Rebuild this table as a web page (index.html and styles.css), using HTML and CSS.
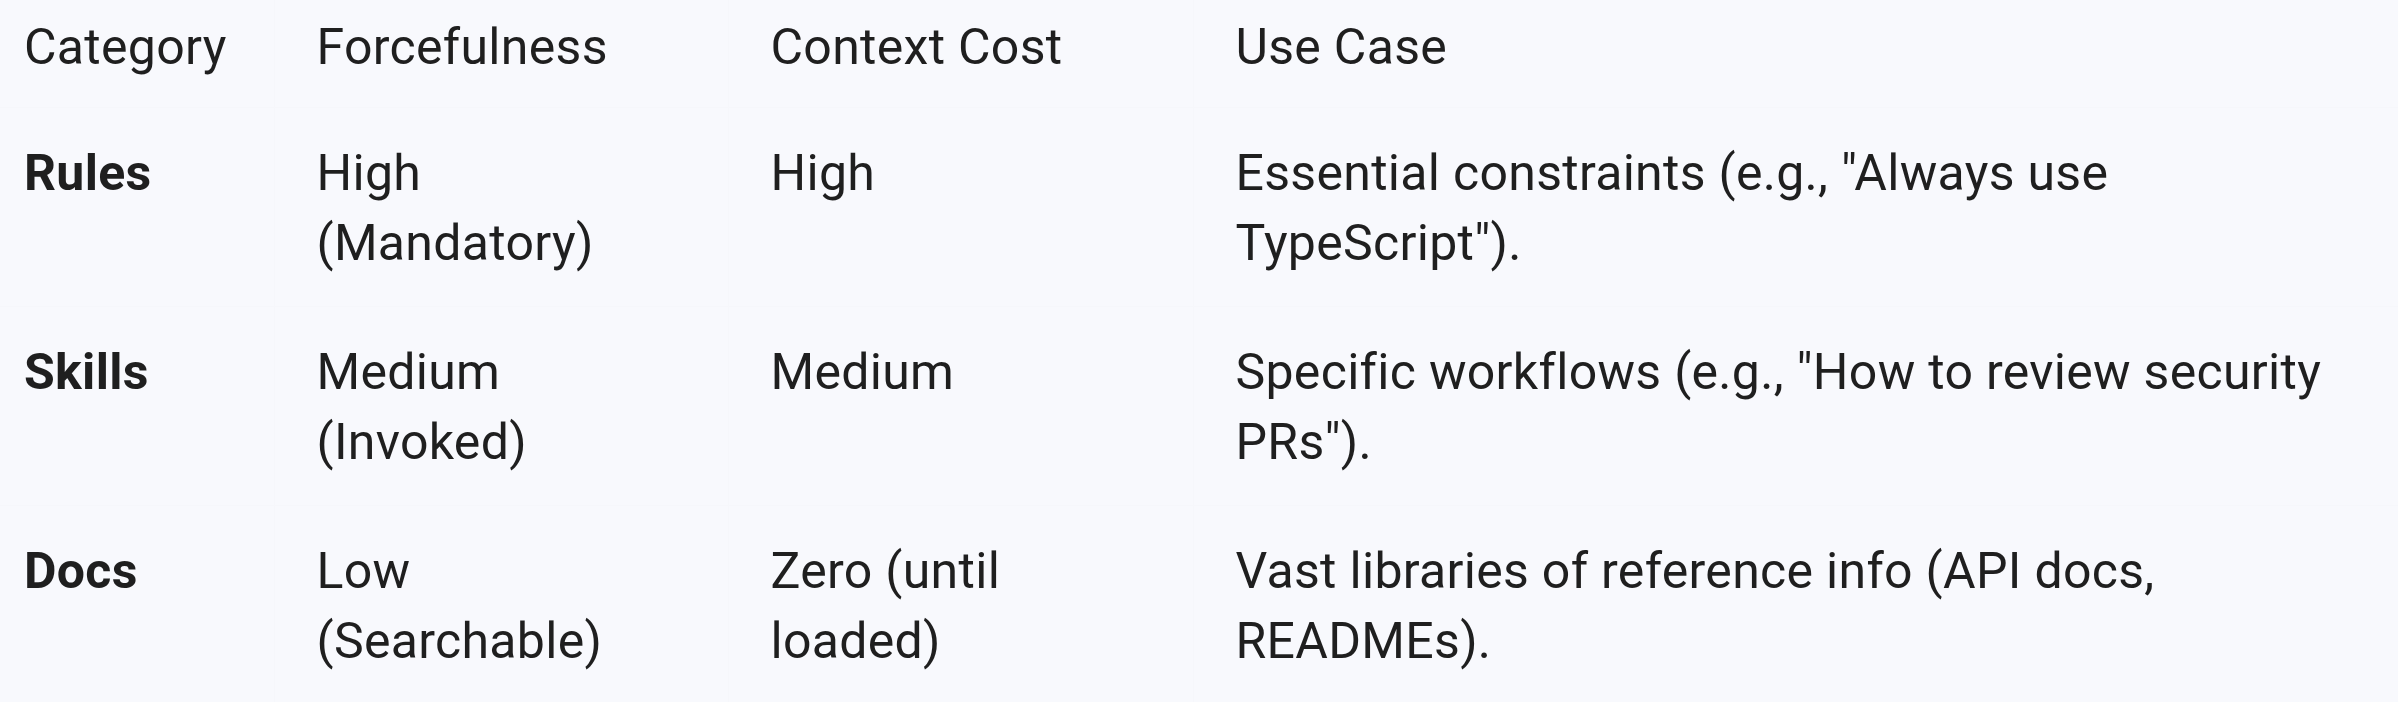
FILE: index.html
```html
<!DOCTYPE html>
<html lang="en">
<head>
<meta charset="utf-8">
<title>Context categories</title>
<link rel="stylesheet" href="styles.css">
</head>
<body>
<table class="ctx-table">
  <colgroup>
    <col class="col-cat">
    <col class="col-force">
    <col class="col-cost">
    <col class="col-use">
  </colgroup>
  <thead>
    <tr>
      <th>Category</th>
      <th>Forcefulness</th>
      <th>Context Cost</th>
      <th>Use Case</th>
    </tr>
  </thead>
  <tbody>
    <tr>
      <td class="cat">Rules</td>
      <td>High (Mandatory)</td>
      <td>High</td>
      <td>Essential constraints (e.g., "Always use TypeScript").</td>
    </tr>
    <tr>
      <td class="cat">Skills</td>
      <td>Medium (Invoked)</td>
      <td>Medium</td>
      <td>Specific workflows (e.g., "How to review security PRs").</td>
    </tr>
    <tr>
      <td class="cat">Docs</td>
      <td>Low (Searchable)</td>
      <td>Zero (until loaded)</td>
      <td>Vast libraries of reference info (API docs, READMEs).</td>
    </tr>
  </tbody>
</table>
</body>
</html>
```

FILE: styles.css
```css
html, body {
  margin: 0;
  padding: 0;
  background: #f8f9fd;
}

body {
  font-family: Roboto, "Liberation Sans", sans-serif;
  font-size: 50px;
  line-height: 70px;
  letter-spacing: 0.3px;
  color: #1f1f1f;
}

.ctx-table {
  width: 2398px;
  border-collapse: collapse;
  table-layout: fixed;
}

.col-cat { width: 274px; }
.col-force { width: 454px; }
.col-cost { width: 465px; }

.ctx-table th,
.ctx-table td {
  text-align: left;
  vertical-align: top;
  font-weight: 400;
  padding: 30px 42px 28px 42px;
  border-bottom: 1px solid #f6f7fb;
  border-left: 1px solid #f6f7fb;
}

.ctx-table th {
  padding-top: 12px;
  padding-bottom: 25px;
}

.ctx-table th:first-child,
.ctx-table td:first-child {
  padding-left: 24px;
  border-left: none;
}

.ctx-table tbody tr:last-child td {
  border-bottom: none;
}

.ctx-table td.cat {
  font-weight: 700;
}
```
